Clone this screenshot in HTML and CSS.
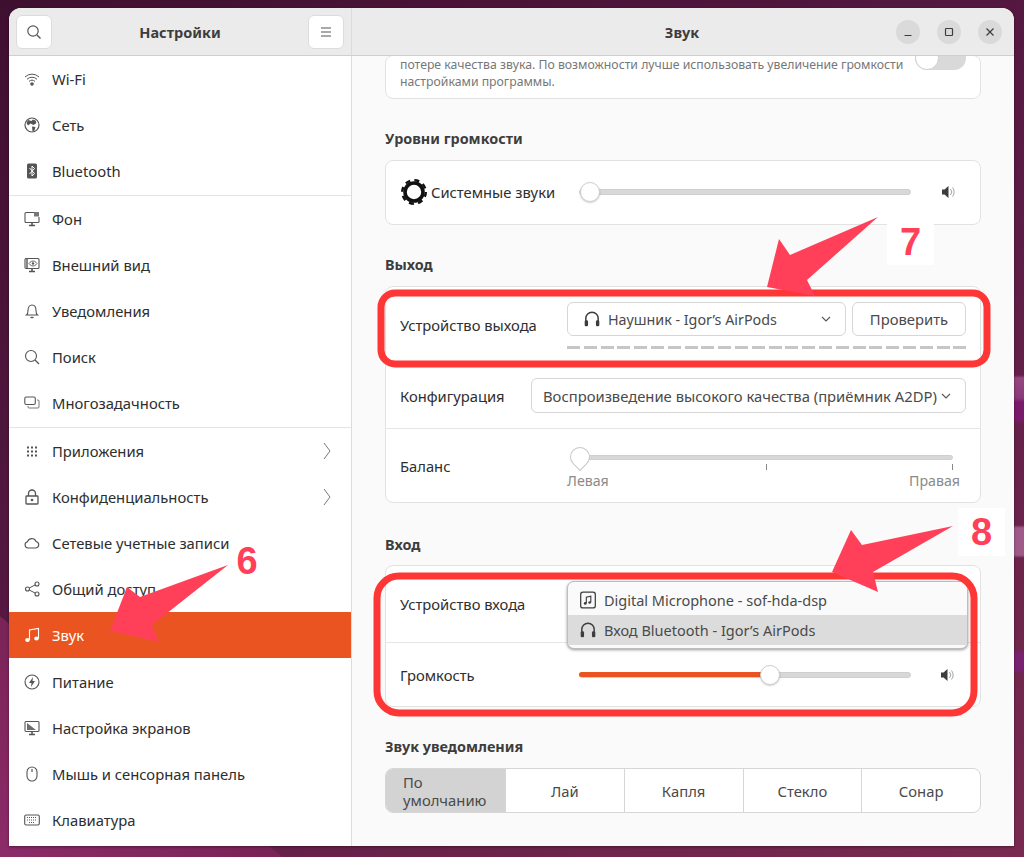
FILE: index.html
```html
<!DOCTYPE html>
<html lang="ru">
<head>
<meta charset="utf-8">
<title>Настройки — Звук</title>
<link rel="stylesheet" href="styles.css">
</head>
<body>
<svg class="defs" width="0" height="0" aria-hidden="true">
  <defs>
    <symbol id="i-phones" viewBox="0 0 16 16"><path d="M2.500 10V7.500a5.500 5.500 0 0 1 11 0V10" fill="none" stroke="currentColor" stroke-width="1.300"/><rect x="1.500" y="9" width="3" height="5.500" rx="1.200" fill="currentColor"/><rect x="11.500" y="9" width="3" height="5.500" rx="1.200" fill="currentColor"/></symbol>
    <symbol id="i-speaker" viewBox="0 0 16 16"><path d="M2 5.500h2.500L8.500 2v12l-4-3.500H2z" fill="currentColor"/><path d="M10.500 5a4.500 4.500 0 0 1 0 6M12.500 3.500a7 7 0 0 1 0 9" fill="none" stroke="currentColor" stroke-width=".8" opacity=".6"/></symbol>
    <symbol id="i-chev" viewBox="0 0 12 12"><path d="M2 4l4 4 4-4" fill="none" stroke="currentColor" stroke-width="1.100"/></symbol>
    <symbol id="i-right" viewBox="0 0 12 20"><path d="M3 2l6 8-6 8" fill="none" stroke="currentColor" stroke-width="1"/></symbol>
  </defs>
</svg>
<div class="window">
  <header class="titlebar">
    <div class="title-left">
      <button class="hbtn" aria-label="Поиск"><svg class="ico" viewBox="0 0 16 16"><circle cx="7" cy="7" r="5.200" fill="none" stroke="currentColor" stroke-width="1.200"/><path d="M11 11l3.500 3.500" stroke="currentColor" stroke-width="1.400"/></svg></button>
      <h1 class="title">Настройки</h1>
      <button class="hbtn" aria-label="Меню"><svg class="ico" viewBox="0 0 16 16"><path d="M3 4h10M3 8h10M3 12h10" stroke="currentColor" stroke-width="1.200"/></svg></button>
    </div>
    <div class="title-right">
      <h2 class="title title-main">Звук</h2>
      <div class="wctl">
        <span class="wbtn"><svg class="wico" viewBox="0 0 12 12"><path d="M2.500 9.500h7" stroke="currentColor" stroke-width="1.200"/></svg></span>
        <span class="wbtn"><svg class="wico" viewBox="0 0 12 12"><rect x="2.500" y="2.500" width="7" height="7" rx=".8" fill="none" stroke="currentColor" stroke-width="1.200"/></svg></span>
        <span class="wbtn"><svg class="wico" viewBox="0 0 12 12"><path d="M2.500 2.500l7 7M9.500 2.500l-7 7" stroke="currentColor" stroke-width="1.200"/></svg></span>
      </div>
    </div>
  </header>
  <div class="body">
    <nav class="sidebar">
      <ul class="group">
        <li class="item"><svg class="ico" viewBox="0 0 16 16"><path d="M1 6a10 10 0 0 1 14 0M3 8.300a7 7 0 0 1 10 0M5 10.500a4 4 0 0 1 6 0" fill="none" stroke="currentColor" stroke-width="1"/><circle cx="8" cy="13" r="1.800" fill="currentColor"/></svg>Wi-Fi</li>
        <li class="item"><svg class="ico" viewBox="0 0 16 16"><circle cx="8" cy="8" r="7" fill="none" stroke="currentColor" stroke-width="1.200"/><path d="M4 3l3.500 1L9 2.500l2.500 1L12.500 6 9.500 8 6.500 6.500 4 8.500 2.500 6zM8 9.500l3.500.5-1 3.500-2 1z" fill="currentColor"/></svg>Сеть</li>
        <li class="item"><svg class="ico" viewBox="0 0 16 16"><rect x="3" y="0.500" width="10" height="15" rx="1.500" fill="currentColor"/><path d="M5.500 5l5 5.500L8 13V3l2.500 2.500-5 5.500" fill="none" stroke="#fff" stroke-width="1"/></svg>Bluetooth</li>
      </ul>
      <ul class="group">
        <li class="item"><svg class="ico" viewBox="0 0 16 16"><path d="M10 1.500H2A1 1 0 0 0 1 2.500v8a1 1 0 0 0 1 1h12a1 1 0 0 0 1-1V6" fill="none" stroke="currentColor" stroke-width="1.100"/><path d="M10 1h5v4.500h-5z" fill="currentColor" opacity=".8"/><path d="M5 14.500h6M8 11.500v3" stroke="currentColor" stroke-width="1.600"/></svg>Фон</li>
        <li class="item"><svg class="ico" viewBox="0 0 16 16"><rect x="1" y="1.500" width="14" height="10" rx="1" fill="none" stroke="currentColor" stroke-width="1.100"/><path d="M3 2v9" stroke="currentColor" stroke-width="1.400"/><path d="M5 6.500s1.500-2.500 4-2.500 4 2.500 4 2.500-1.500 2.500-4 2.500-4-2.500-4-2.500z" fill="none" stroke="currentColor" stroke-width=".9"/><circle cx="9" cy="6.500" r="1.200" fill="currentColor"/><path d="M5 14.500h6M8 11.500v3" stroke="currentColor" stroke-width="1.600"/></svg>Внешний вид</li>
        <li class="item"><svg class="ico" viewBox="0 0 16 16"><path d="M2.500 12c1.300-1 1.500-2 1.500-4.500C4 4.500 5.500 2 8 2s4 2.500 4 5.500c0 2.500.2 3.500 1.500 4.500z" fill="none" stroke="currentColor" stroke-width="1.100"/><path d="M6.500 14.500h3" stroke="currentColor" stroke-width="1.400"/></svg>Уведомления</li>
        <li class="item"><svg class="ico" viewBox="0 0 16 16"><circle cx="7" cy="7" r="5.500" fill="none" stroke="currentColor" stroke-width="1.100"/><path d="M11 11l4 4" stroke="currentColor" stroke-width="1.300"/></svg>Поиск</li>
        <li class="item"><svg class="ico" viewBox="0 0 16 16"><rect x="0.800" y="2" width="10.500" height="7.500" rx="1.500" fill="none" stroke="currentColor" stroke-width="1.100"/><path d="M13 5h1a1 1 0 0 1 1 1v6a1 1 0 0 1-1 1H5a1 1 0 0 1-1-1v-1" fill="none" stroke="currentColor" stroke-width=".8"/></svg>Многозадачность</li>
      </ul>
      <ul class="group">
        <li class="item"><svg class="ico" viewBox="0 0 16 16"><path d="M3 3.500h2v2H3zM7 3.500h2v2H7zM11 3.500h2v2h-2zM3 7.500h2v2H3zM7 7.500h2v2H7zM11 7.500h2v2h-2zM3 11.500h2v2H3zM7 11.500h2v2H7zM11 11.500h2v2h-2z" fill="currentColor"/></svg>Приложения<svg class="arrow"><use href="#i-right"/></svg></li>
        <li class="item"><svg class="ico" viewBox="0 0 16 16"><path d="M4.500 7V4.500a3.500 3.500 0 0 1 7 0V7" fill="none" stroke="currentColor" stroke-width="1.300"/><rect x="2" y="7" width="12" height="8" rx=".8" fill="none" stroke="currentColor" stroke-width="1.300"/><circle cx="8" cy="11" r="1.300" fill="currentColor"/></svg>Конфиденциальность<svg class="arrow"><use href="#i-right"/></svg></li>
        <li class="item"><svg class="ico" viewBox="0 0 16 16"><path d="M4 13a3.200 3.200 0 0 1-.5-6.300A4.500 4.500 0 0 1 12 6.500 3.300 3.300 0 0 1 12 13z" fill="none" stroke="currentColor" stroke-width="1.100"/></svg>Сетевые учетные записи</li>
        <li class="item"><svg class="ico" viewBox="0 0 16 16"><circle cx="3.500" cy="8" r="2" fill="none" stroke="currentColor" stroke-width="1.100"/><circle cx="13" cy="3" r="2" fill="none" stroke="currentColor" stroke-width="1.100"/><circle cx="13" cy="13" r="2" fill="none" stroke="currentColor" stroke-width="1.100"/><path d="M5.300 7l6-3.200M5.300 9l6 3.200" stroke="currentColor"/></svg>Общий доступ</li>
        <li class="item active"><svg class="ico" viewBox="0 0 16 16"><path d="M5.500 13V3l9-1.500V11" fill="none" stroke="currentColor" stroke-width="1.100"/><ellipse cx="3.500" cy="13" rx="2.300" ry="2" fill="currentColor"/><ellipse cx="12.500" cy="11.500" rx="2.300" ry="2" fill="currentColor"/></svg>Звук</li>
        <li class="item"><svg class="ico" viewBox="0 0 16 16"><circle cx="8" cy="8" r="7" fill="none" stroke="currentColor" stroke-width="1.100"/><path d="M9 3L5 9h2.500L7 13l4-6H8.500z" fill="currentColor"/></svg>Питание</li>
        <li class="item"><svg class="ico" viewBox="0 0 16 16"><rect x="1" y="1.500" width="14" height="10" rx="1" fill="none" stroke="currentColor" stroke-width="1.100"/><path d="M3 3l9 7H3z" fill="currentColor" opacity=".85"/><path d="M5 14.500h6M8 11.500v3" stroke="currentColor" stroke-width="1.600"/></svg>Настройка экранов</li>
        <li class="item"><svg class="ico" viewBox="0 0 16 16"><rect x="3" y="1" width="10" height="14" rx="5" fill="none" stroke="currentColor" stroke-width="1.100"/><path d="M8 3v3" stroke="currentColor" stroke-width="1.200"/></svg>Мышь и сенсорная панель</li>
        <li class="item"><svg class="ico" viewBox="0 0 16 16"><rect x="0.700" y="3" width="14.600" height="10" rx="1.500" fill="none" stroke="currentColor" stroke-width="1.100"/><path d="M3 5.500h10M3 8h10M5 10.500h6" stroke="currentColor" stroke-width="1" stroke-dasharray="1 1"/></svg>Клавиатура</li>
      </ul>
    </nav>
    <main class="content">
      <section class="card card-top">
        <p class="note">потере качества звука. По возможности лучше использовать увеличение громкости<br>настройками программы.</p>
        <span class="toggle"><span class="knob"></span></span>
      </section>

      <h3 class="heading">Уровни громкости</h3>
      <section class="card">
        <div class="row row-levels">
          <svg class="gear" viewBox="0 0 28 28"><circle cx="14" cy="14" r="9" fill="none" stroke="#111" stroke-width="3.600"/><circle cx="14" cy="14" r="11.800" fill="none" stroke="#111" stroke-width="2.400" stroke-dasharray="5 4.270"/></svg>
          <span class="label">Системные звуки</span>
          <div class="slider slider-sys"><span class="thumb thumb-start"></span></div>
          <svg class="speaker"><use href="#i-speaker"/></svg>
        </div>
      </section>

      <h3 class="heading">Выход</h3>
      <section class="card">
        <div class="row row-out">
          <span class="label label-out">Устройство выхода</span>
          <div class="out-col">
            <div class="out-ctl">
              <div class="combo combo-out"><svg class="ph"><use href="#i-phones"/></svg><span class="combo-text">Наушник - Igor’s AirPods</span><svg class="chev"><use href="#i-chev"/></svg></div>
              <button class="btn">Проверить</button>
            </div>
            <div class="level"></div>
          </div>
        </div>
        <div class="row row-conf">
          <span class="label label-conf">Конфигурация</span>
          <div class="combo combo-conf"><span class="combo-text">Воспроизведение высокого качества (приёмник A2DP)</span><svg class="chev"><use href="#i-chev"/></svg></div>
        </div>
        <div class="row row-bal">
          <span class="label label-bal">Баланс</span>
          <div class="bal">
            <div class="bal-track"><span class="pin"></span></div>
            <div class="ticks"><i></i><i></i></div>
            <div class="bal-labels"><span>Левая</span><span>Правая</span></div>
          </div>
        </div>
      </section>

      <h3 class="heading heading-in">Вход</h3>
      <section class="card">
        <div class="row row-in">
          <span class="label">Устройство входа</span>
          <div class="popup">
            <div class="pop-item"><svg class="ph" viewBox="0 0 16 16"><rect x="1.500" y="1" width="13" height="14" rx="2" fill="none" stroke="currentColor" stroke-width="1.100"/><path d="M6.500 11V5.500l4-.8V10" fill="none" stroke="currentColor"/><circle cx="5.500" cy="11" r="1.200" fill="currentColor"/><circle cx="9.500" cy="10.200" r="1.200" fill="currentColor"/></svg>Digital Microphone - sof-hda-dsp</div>
            <div class="pop-item selected"><svg class="ph"><use href="#i-phones"/></svg>Вход Bluetooth - Igor’s AirPods</div>
          </div>
        </div>
        <div class="row row-vol">
          <span class="label">Громкость</span>
          <div class="slider slider-vol"><span class="fill"></span><span class="thumb"></span></div>
          <svg class="speaker"><use href="#i-speaker"/></svg>
        </div>
      </section>

      <h3 class="heading">Звук уведомления</h3>
      <div class="sounds">
        <button class="snd snd-on">По умолчанию</button>
        <button class="snd">Лай</button>
        <button class="snd">Капля</button>
        <button class="snd">Стекло</button>
        <button class="snd">Сонар</button>
      </div>
    </main>
  </div>
</div>

<svg class="marks" viewBox="0 0 1024 857" aria-hidden="true">
  <rect class="frame" x="381" y="293" width="606" height="71" rx="14"/>
  <rect class="frame" x="377" y="576" width="597" height="137" rx="22"/>
  <polygon class="arrow-mark" points="228,565 140,597 127,587 110,631 159,642 152,625"/>
  <polygon class="arrow-mark" points="878,217 790,255 779,239 767,287 815,296 807,280"/>
  <polygon class="arrow-mark" points="953,526 862,545 851,530 832,572 878,592 873,572"/>
</svg>
<span class="num num-6">6</span>
<span class="num num-7">7</span>
<span class="num num-8">8</span>
</body>
</html>
```

FILE: styles.css
```css
* { box-sizing: border-box; }
html, body { margin: 0; height: 100%; }
body {
  position: relative;
  width: 1024px;
  height: 857px;
  overflow: hidden;
  padding: 8px 10px 11px 9px;
  font-family: "Noto Sans", "Liberation Sans", sans-serif;
  font-size: 14.8px;
  color: #3d3d3d;
  background:
    linear-gradient(180deg, transparent 375px, #96467f 378px, #8a3a78 398px, #7a1a6a 402px, #7a1a6a 420px, transparent 424px, transparent 525px, #a05a8a 528px, #a05a8a 555px, transparent 558px, transparent 650px, #7a2070 653px, #7a2070 670px, transparent 674px) right top / 10px 100% no-repeat,
    linear-gradient(220.500deg, transparent 1133px, #7a2358 1134px, #8c2b68 100%),
    linear-gradient(150deg, #3f0f30 0, #5a1b45 52%, #7a2a50 100%);
}
.defs { position: absolute; }
ul, h1, h2, h3, p { margin: 0; padding: 0; }
ul { list-style: none; }
button { font: inherit; color: inherit; }

.window {
  display: flex;
  flex-direction: column;
  height: 838px;
  border-radius: 12px 12px 0 0;
  overflow: hidden;
  background: #fafafa;
  box-shadow: 0 1px 3px rgba(0, 0, 0, .4);
}
.titlebar {
  display: flex;
  flex: none;
  height: 48px;
  background: #ebebeb;
  border-bottom: 1px solid #cfcfcf;
}
.title-left {
  display: flex;
  flex: none;
  align-items: center;
  justify-content: space-between;
  width: 343px;
  padding: 0 7px;
  border-right: 1px solid #dcdcdc;
}
.title { font-size: 14.5px; font-weight: 700; color: #3d3d3d; }
.hbtn {
  display: flex;
  align-items: center;
  justify-content: center;
  width: 36px;
  height: 34px;
  padding: 0;
  background: #fff;
  border: 1px solid #dcdcdc;
  border-radius: 6px;
  color: #3d3d3d;
}
.ico { flex: none; width: 16px; height: 16px; color: #555; }
.title-right {
  position: relative;
  display: flex;
  flex: 1;
  align-items: center;
  justify-content: center;
}
.title-main { margin-left: -2px; }
.wctl { position: absolute; top: 0; right: 0; bottom: 0; display: flex; align-items: center; gap: 17px; padding-right: 12px; }
.wbtn { display: flex; align-items: center; justify-content: center; width: 24px; height: 24px; border-radius: 50%; background: #dadada; color: #3d3d3d; }
.wico { width: 12px; height: 12px; }

.body { display: flex; flex: 1; min-height: 0; }
.sidebar {
  flex: none;
  width: 343px;
  background: #fff;
  border-right: 1px solid #dcdcdc;
}
.group + .group { border-top: 1px solid #e4e4e4; }
.item {
  display: flex;
  align-items: center;
  height: 46.2px;
  padding: 0 18px 0 15px;
  gap: 12px;
  font-size: 14.8px;
  color: #2e2e2e;
}
.item .ico { width: 16px; height: 16px; }
.item.active { background: #e95420; color: #fff; }
.item.active .ico { color: #fff; }
.arrow { width: 12px; height: 20px; margin-left: auto; color: #777; }

.content { flex: 1; min-width: 0; overflow: hidden; padding: 0 33px; }
.card {
  position: relative;
  background: #fff;
  border: 1px solid #e2e2e2;
  border-radius: 8px;
}
.card-top {
  display: flex;
  justify-content: space-between;
  margin-top: -1px;
  height: 44px;
  padding: 0 14px;
}
.note { font-size: 12.25px; line-height: 17px; color: #777; white-space: nowrap; }
.toggle {
  position: relative;
  flex: none;
  width: 51px;
  height: 24px;
  margin-top: -10px;
  background: #d9d9d9;
  border-radius: 12px;
}
.knob { position: absolute; top: 0; left: 0; width: 24px; height: 24px; background: #fff; border: 1px solid #d0d0d0; border-radius: 50%; }

.heading { height: 20px; margin: 30px 0 11px; font-size: 14.4px; line-height: 20px; font-weight: 700; color: #3d3d3d; }
.heading-in { margin-top: 31px; line-height: 22px; }
.row { position: relative; display: flex; align-items: center; padding: 0 14px; }
.row + .row { border-top: 1px solid #e6e6e6; }
.label { flex: none; font-size: 14.75px; color: #2e2e2e; }
.row-levels { height: 63px; padding-bottom: 2px; }
.gear { flex: none; width: 28px; height: 28px; margin-right: 3px; }
.slider { position: relative; flex: none; width: 332px; height: 6px; border-radius: 3px; background: #d8d8d8; border: 1px solid #cfcfcf; }
.slider-sys { margin-left: 24px; }
.row-vol .label { width: 165px; }
.slider-vol { margin-left: 14px; }
.thumb { position: absolute; top: -8px; left: 180px; width: 20px; height: 20px; background: #fff; border: 1px solid #cfcfcf; border-radius: 50%; box-shadow: 0 1px 2px rgba(0, 0, 0, .2); }
.thumb-start { left: 0; }
.fill { position: absolute; top: -1px; left: -1px; width: 186px; height: 5px; background: #e95420; border-radius: 3px; }
.speaker { flex: none; width: 16px; height: 16px; margin-left: 29px; color: #3d3d3d; }
.row-vol .speaker { margin-left: 28px; }

.row-out { align-items: flex-start; height: 76px; padding-top: 15px; }
.label-out { width: 167px; margin-top: 13px; }
.out-col { flex: 1; }
.out-ctl { display: flex; gap: 6px; }
.combo {
  display: flex;
  align-items: center;
  height: 34px;
  padding: 0 13px 0 11px;
  background: #fff;
  border: 1px solid #d6d6d6;
  border-radius: 6px;
  font-size: 14.8px;
  color: #4a4a4a;
}
.combo-out { flex: none; width: 279px; padding-left: 15px; font-size: 14.3px; }
.label-conf { width: 131px; }
.combo-conf { flex: 1; height: 35px; }
.combo-text { flex: 1; white-space: nowrap; }
.ph { flex: none; width: 18px; height: 18px; margin-right: 7px; color: #3d3d3d; }
.chev { flex: none; width: 12px; height: 12px; color: #555; }
.btn { flex: none; width: 114px; height: 34px; padding: 0; background: #fff; border: 1px solid #d6d6d6; border-radius: 6px; color: #4a4a4a; font-size: 14.8px; }
.level { height: 3px; margin-top: 10px; background: repeating-linear-gradient(90deg, #c6c6c6 0 13px, transparent 13px 16.8px); }
.row-conf { height: 65px; padding-bottom: 1px; }
.row-bal { align-items: flex-start; height: 74px; }
.label-bal { width: 167px; margin-top: 27px; }
.bal { position: relative; flex: 1; }
.bal-track { position: relative; height: 5px; margin: 26px 13px 0 13px; background: #d8d8d8; border: 1px solid #cfcfcf; border-radius: 3px; }
.pin { position: absolute; top: -9px; left: -11px; width: 20px; height: 20px; background: #fff; border: 1px solid #c8c8c8; border-radius: 50% 50% 50% 0; transform: rotate(-45deg); }
.ticks { position: relative; display: flex; justify-content: space-between; margin: 4px 13px 0 199px; height: 6px; }
.ticks i { width: 1px; height: 6px; background: #888; }
.bal-labels { display: flex; justify-content: space-between; padding-right: 6px; margin-top: 2px; font-size: 14.2px; line-height: 18px; color: #8a8a8a; }

.row-in { height: 76px; }
.row-vol { height: 64px; }
.popup { position: absolute; z-index: 2; top: 15px; left: 181px; width: 401px; height: 68px; padding-top: 3px; background: #fafafa; border: 1px solid #bdbdbd; border-radius: 7px; box-shadow: 0 1px 3px rgba(0, 0, 0, .4); }
.pop-item { display: flex; align-items: center; height: 30px; padding: 0 11px; font-size: 14.5px; color: #4a4a4a; }
.pop-item.selected { background: #dcdcdc; }

.sounds { display: grid; grid-template-columns: 119px repeat(4, minmax(0, 1fr)); height: 45px; background: #fff; border: 1px solid #d6d6d6; border-radius: 8px; overflow: hidden; }
.snd { min-width: 0; padding: 0; background: none; border: 0; border-left: 1px solid #d6d6d6; color: #4a4a4a; font-size: 14.8px; }
.snd-on { padding: 0 0 0 17px; background: #d3d3d3; border-left: 0; text-align: left; line-height: 18px; }

.marks { position: absolute; z-index: 5; top: 0; left: 0; width: 1024px; height: 857px; pointer-events: none; }
.frame { fill: none; stroke: #ff3636; stroke-width: 7; }
.arrow-mark { fill: #ff4058; }
.num { position: absolute; z-index: 6; display: flex; align-items: center; justify-content: center; font-family: "Liberation Sans", sans-serif; font-size: 38px; font-weight: 700; line-height: 1; color: #ff4058; }
.num-6 { top: 542px; left: 234px; width: 26px; height: 38px; }
.num-7 { top: 218px; left: 887px; width: 47px; height: 47px; background: #fff; }
.num-8 { top: 508px; left: 958px; width: 47px; height: 48px; background: #fff; }
```
